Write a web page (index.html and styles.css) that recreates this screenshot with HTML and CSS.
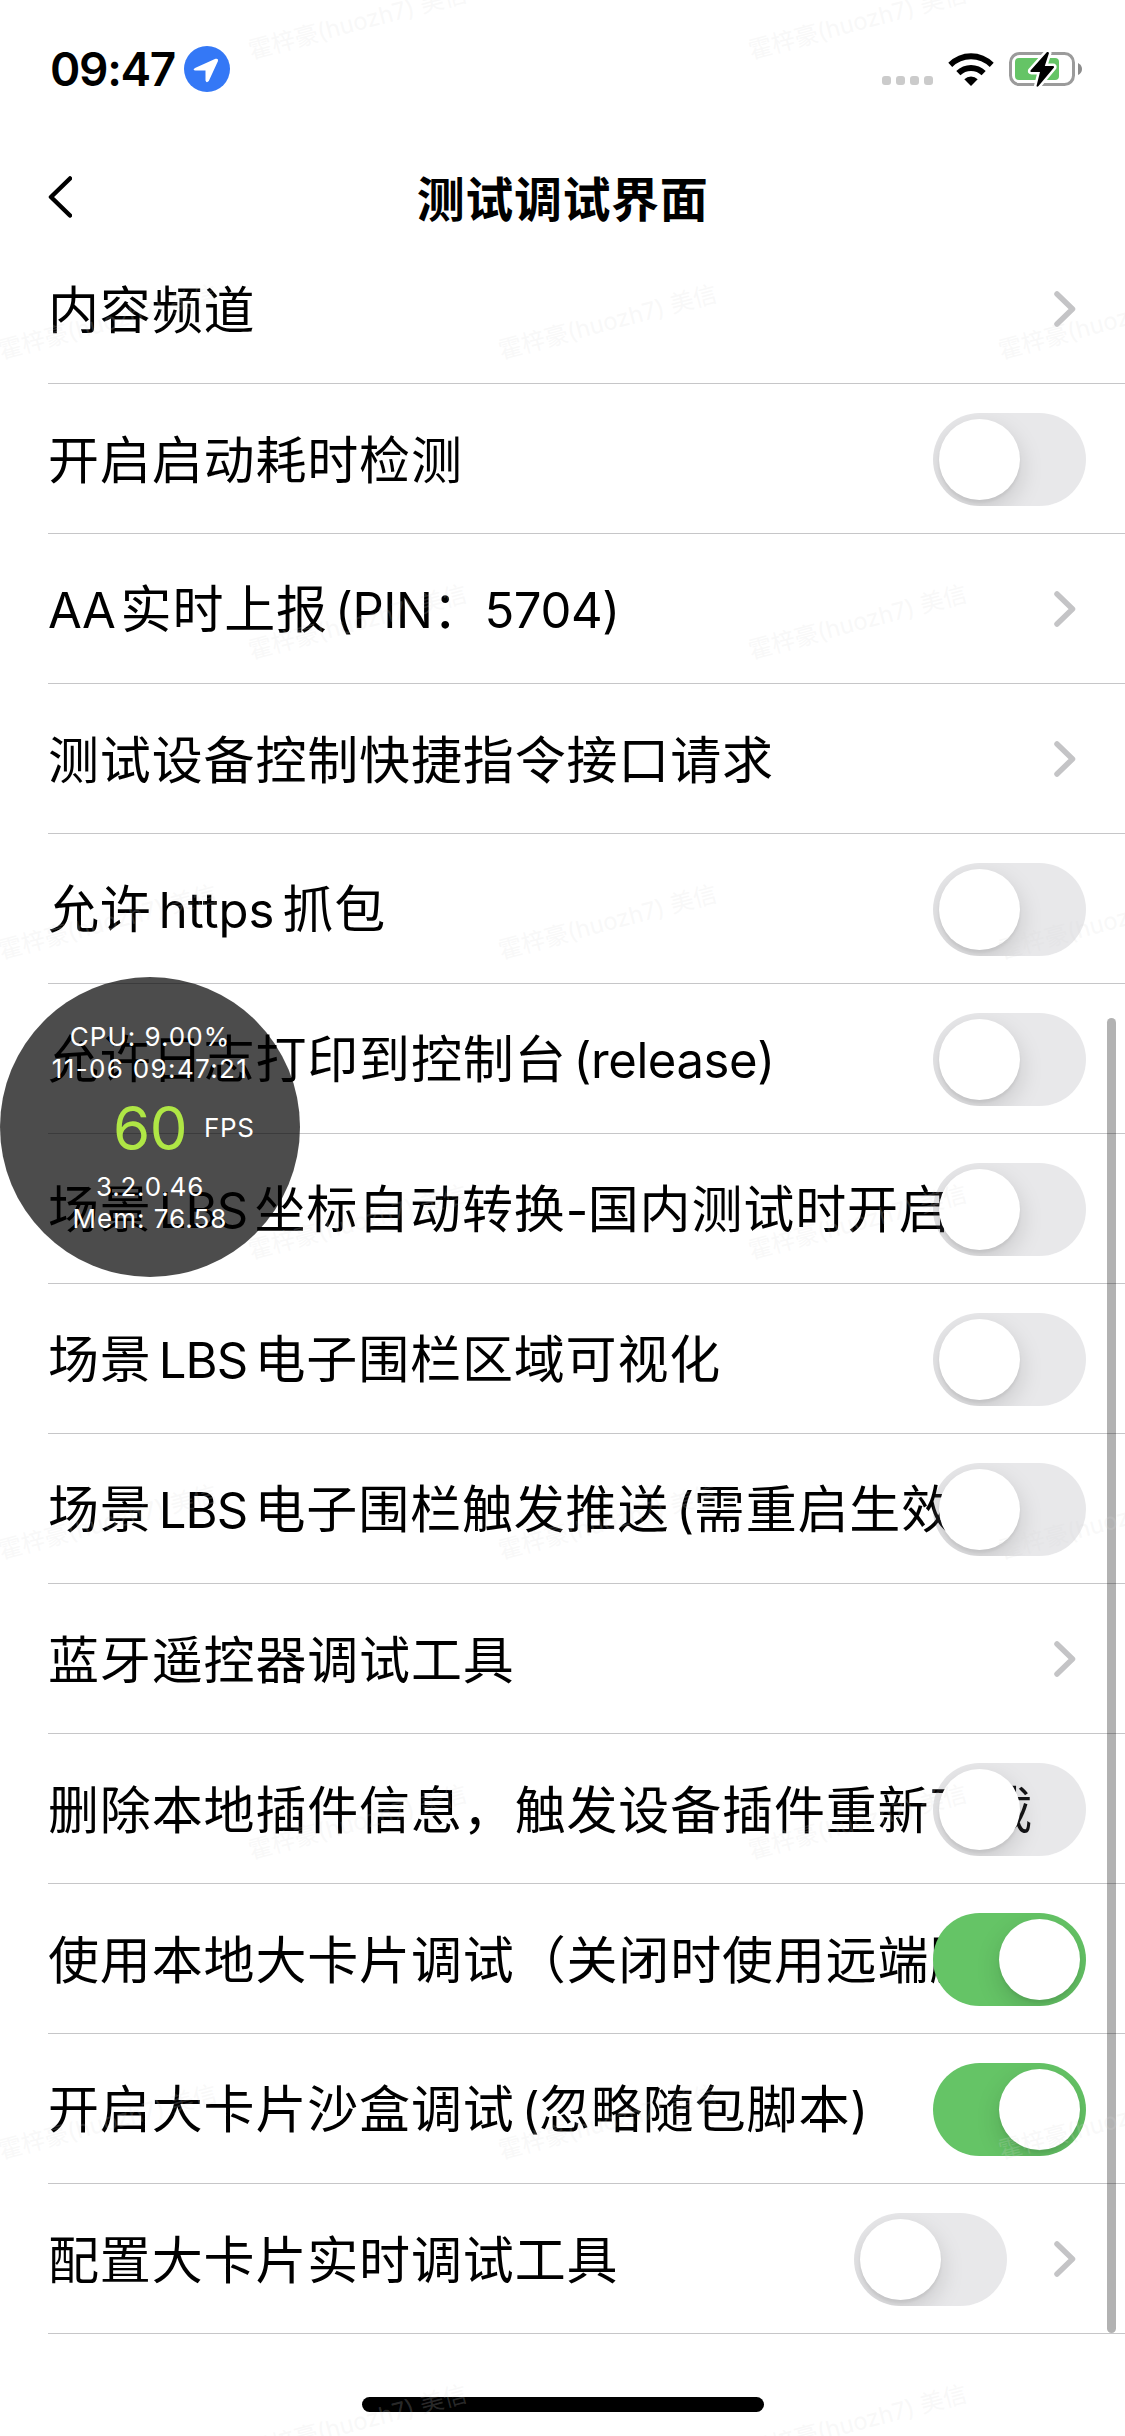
FILE: index.html
```html
<!DOCTYPE html>
<html lang="zh-CN">
<head>
<meta charset="utf-8">
<title>测试调试界面</title>
<link rel="stylesheet" href="styles.css">
</head>
<body>
<svg width="0" height="0" class="defs">
  <symbol id="chevron" viewBox="0 0 22 36"><path d="M3 3 L18.500 18 L3 33" fill="none" stroke="#c4c4c6" stroke-width="5.500" stroke-linecap="round" stroke-linejoin="round"/></symbol>
</svg>
<div class="screen">
  <header class="status">
    <span class="time">09:47</span>
    <svg class="location" viewBox="0 0 46 46"><circle cx="23" cy="23" r="23" fill="#3478f6"/><path d="M11 22 L31.500 12.800 Q34.500 12 34 15 L24.800 35 Q22.500 37.500 21.500 34.500 V24.500 H11.500 Q8 24 11 22Z" fill="#fff"/></svg>
    <div class="cellular"><i></i><i></i><i></i><i></i></div>
    <svg class="wifi" viewBox="0 0 46 33"><path d="M0.300 9.800 A32 32 0 0 1 45.700 9.800 L41.800 14 A26.500 26.500 0 0 0 4.200 14Z"/><path d="M8.300 18 A21 21 0 0 1 37.700 18 L33.600 22.300 A15.200 15.200 0 0 0 12.400 22.300Z"/><path d="M16.300 26.200 A9.700 9.700 0 0 1 29.700 26.200 L23 33Z"/></svg>
    <svg class="battery" viewBox="0 0 75 38"><rect x="1.500" y="3.500" width="63" height="31" rx="9" fill="none" stroke="#9b9b9b" stroke-width="3"/><rect x="6" y="8" width="44" height="22" rx="4" fill="#65c466"/><path d="M69 13 Q73 15 73 19 Q73 23 69 25Z" fill="#8c8c8c"/><path d="M38 2 L21.500 20.500 Q21 22 22.500 22 H31 L27.500 36 Q28 37.500 29.500 36 L45 17.500 Q45.500 16 44 16 H35.800 L40 3 Q39.500 1.500 38 2Z" fill="#000" stroke="#fff" stroke-width="5" paint-order="stroke"/></svg>
  </header>
  <nav class="nav">
    <svg class="back" viewBox="0 0 24 42"><path d="M22 2.500 L3 21 L22 39.500" fill="none" stroke="#000" stroke-width="4.500" stroke-linecap="round" stroke-linejoin="round"/></svg>
    <h1 class="title">测试调试界面</h1>
  </nav>
  <main class="list">
    <div class="row"><span class="label">内容频道</span><svg class="chevron"><use href="#chevron"/></svg></div>
    <div class="row"><span class="label">开启启动耗时检测</span><span class="switch"></span></div>
    <div class="row"><span class="label"><span class="latin lead">AA</span>实时上报<span class="latin paren">(PIN</span>：<span class="latin digits">5704)</span></span><svg class="chevron"><use href="#chevron"/></svg></div>
    <div class="row"><span class="label">测试设备控制快捷指令接口请求</span><svg class="chevron"><use href="#chevron"/></svg></div>
    <div class="row"><span class="label">允许<span class="latin word">https</span>抓包</span><span class="switch"></span></div>
    <div class="row"><span class="label">允许日志打印到控制台<span class="latin paren">(release)</span></span><span class="switch"></span></div>
    <div class="row"><span class="label">场景<span class="latin word abbr">LBS</span>坐标自动转换<span class="latin hyphen">-</span>国内测试时开启</span><span class="switch"></span></div>
    <div class="row"><span class="label">场景<span class="latin word abbr">LBS</span>电子围栏区域可视化</span><span class="switch"></span></div>
    <div class="row"><span class="label">场景<span class="latin word abbr">LBS</span>电子围栏触发推送<span class="latin paren">(</span>需重启生效<span class="latin">)</span></span><span class="switch"></span></div>
    <div class="row"><span class="label">蓝牙遥控器调试工具</span><svg class="chevron"><use href="#chevron"/></svg></div>
    <div class="row"><span class="label">删除本地插件信息，触发设备插件重新下载</span><span class="switch"></span></div>
    <div class="row"><span class="label">使用本地大卡片调试（关闭时使用远端脚本）</span><span class="switch on"></span></div>
    <div class="row"><span class="label">开启大卡片沙盒调试<span class="latin paren">(</span>忽略随包脚本<span class="latin">)</span></span><span class="switch on"></span></div>
    <div class="row"><span class="label">配置大卡片实时调试工具</span><span class="switch"></span><svg class="chevron"><use href="#chevron"/></svg></div>
  </main>
  <footer class="home"><div class="indicator"></div></footer>

  <div class="scrollbar"></div>
  <div class="monitor">
    <span class="cpu">CPU: 9.00%</span>
    <span class="clock">11-06 09:47:21</span>
    <div class="fps"><b>60</b><span>FPS</span></div>
    <span class="version">3.2.0.46</span>
    <span class="mem">Mem: 76.58</span>
  </div>
  <div class="watermarks">
    <div class="wm-row"><span>霍梓豪(huozh7) 美信</span><span>霍梓豪(huozh7) 美信</span></div>
    <div class="wm-row"><span>霍梓豪(huozh7) 美信</span><span>霍梓豪(huozh7) 美信</span><span>霍梓豪(huozh7) 美信</span></div>
    <div class="wm-row"><span>霍梓豪(huozh7) 美信</span><span>霍梓豪(huozh7) 美信</span></div>
    <div class="wm-row"><span>霍梓豪(huozh7) 美信</span><span>霍梓豪(huozh7) 美信</span><span>霍梓豪(huozh7) 美信</span></div>
    <div class="wm-row"><span>霍梓豪(huozh7) 美信</span><span>霍梓豪(huozh7) 美信</span></div>
    <div class="wm-row"><span>霍梓豪(huozh7) 美信</span><span>霍梓豪(huozh7) 美信</span><span>霍梓豪(huozh7) 美信</span></div>
    <div class="wm-row"><span>霍梓豪(huozh7) 美信</span><span>霍梓豪(huozh7) 美信</span></div>
    <div class="wm-row"><span>霍梓豪(huozh7) 美信</span><span>霍梓豪(huozh7) 美信</span><span>霍梓豪(huozh7) 美信</span></div>
    <div class="wm-row"><span>霍梓豪(huozh7) 美信</span><span>霍梓豪(huozh7) 美信</span></div>
  </div>
</div>
</body>
</html>
```
FILE: styles.css
```css
* { box-sizing: border-box; }

body {
  margin: 0;
  background: #fff;
  color: #000;
  font-family: Inter, "Noto Sans CJK SC", sans-serif;
}

.defs { position: absolute; }

.screen {
  position: relative;
  width: 1125px;
  height: 2436px;
  overflow: hidden;
  display: flex;
  flex-direction: column;
}

/* status bar */
.status {
  height: 138px;
  flex: none;
  display: flex;
  align-items: center;
  padding: 0 43px 0 50px;
}
.time {
  width: 134px;
  font-size: 46px;
  font-weight: 600;
  line-height: 46px;
  letter-spacing: -1.3px;
  white-space: nowrap;
}
.location { width: 46px; height: 46px; }
.cellular { display: flex; gap: 5px; margin: 23px 15px 0 auto; }
.cellular i { width: 9px; height: 9px; border-radius: 3px; background: #cbcbcb; }
.wifi { width: 46px; height: 33px; margin-right: 15px; }
.battery { width: 75px; height: 38px; margin-right: -2px; }

/* navigation bar */
.nav {
  height: 96px;
  flex: none;
  display: grid;
  grid-template-columns: 120px 1fr 120px;
  align-items: start;
}
.back { width: 24px; height: 42px; margin: 38px 0 0 48px; }
.title {
  margin: 32px 0 0;
  text-align: center;
  font-size: 48px;
  font-weight: 700;
  line-height: 60px;
  letter-spacing: 0.6px;
}

/* settings list */
.list { flex: none; padding-left: 48px; }
.row {
  height: 150px;
  display: flex;
  align-items: center;
  border-bottom: 1px solid #c6c6c8;
  padding: 1px 39px 0 0;
}
.label {
  flex: 1;
  min-width: 0;
  padding-top: 3px;
  white-space: nowrap;
  font-size: 51px;
  line-height: 72px;
  letter-spacing: 0.85px;
}
.latin { font-size: 49px; letter-spacing: -0.4px; }
.lead { margin-right: 5px; }
.word { margin: 0 8px 0 7px; letter-spacing: 0; }
.abbr { margin: 0 7px 0 7px; letter-spacing: -0.8px; }
.paren { margin-left: 7px; }

.switch {
  position: relative;
  flex: none;
  width: 153px;
  height: 93px;
  padding: 6px;
  border-radius: 47px;
  overflow: hidden;
  background: rgba(120, 120, 128, 0.17);
}
.switch::before {
  content: "";
  display: block;
  width: 81px;
  height: 81px;
  border-radius: 50%;
  background: #fff;
  box-shadow: 0 9px 24px rgba(0, 0, 0, 0.15), 0 3px 3px rgba(0, 0, 0, 0.06);
}
.switch.on { background: #65c466; }
.switch.on::before { margin-left: 60px; }

.chevron { flex: none; width: 22px; height: 36px; margin-right: 10px; }
.switch + .chevron { margin-left: 47px; }

.home { flex: 1; display: flex; justify-content: center; align-items: flex-end; padding-bottom: 24px; }
.indicator { width: 402px; height: 15px; border-radius: 8px; background: #000; }

/* layers floating over the list */
.scrollbar {
  position: absolute;
  right: 9px;
  top: 1018px;
  width: 9px;
  height: 1315px;
  border-radius: 5px;
  background: rgba(0, 0, 0, 0.3);
}
.monitor {
  position: absolute;
  left: 0;
  top: 977px;
  width: 300px;
  height: 300px;
  padding-top: 44px;
  border-radius: 50%;
  background: rgba(0, 0, 0, 0.7);
  color: #fff;
  font-size: 26px;
  line-height: 32px;
  letter-spacing: 1px;
  display: flex;
  flex-direction: column;
  align-items: center;
  white-space: nowrap;
}
.clock { letter-spacing: 1.35px; }
.version { letter-spacing: 0.8px; }
.fps { align-self: stretch; display: flex; align-items: center; height: 86px; padding-left: 113px; letter-spacing: 0.6px; }
.fps b { width: 91px; font-size: 60px; font-weight: 400; letter-spacing: -0.5px; color: #afe645; }

.watermarks {
  position: absolute;
  inset: 0;
  overflow: hidden;
  pointer-events: none;
  font-size: 23.7px;
  line-height: 30px;
  color: rgba(218, 218, 218, 0.2);
}
.wm-row { height: 300px; display: flex; margin-left: 3px; }
.wm-row:first-child { margin-top: -231px; }
.wm-row:nth-child(odd) { margin-left: 253px; }
.wm-row span {
  flex: none;
  width: 500px;
  height: 300px;
  padding-top: 267px;
  white-space: nowrap;
  transform: rotate(-15deg);
  transform-origin: 0 297px;
}
```
